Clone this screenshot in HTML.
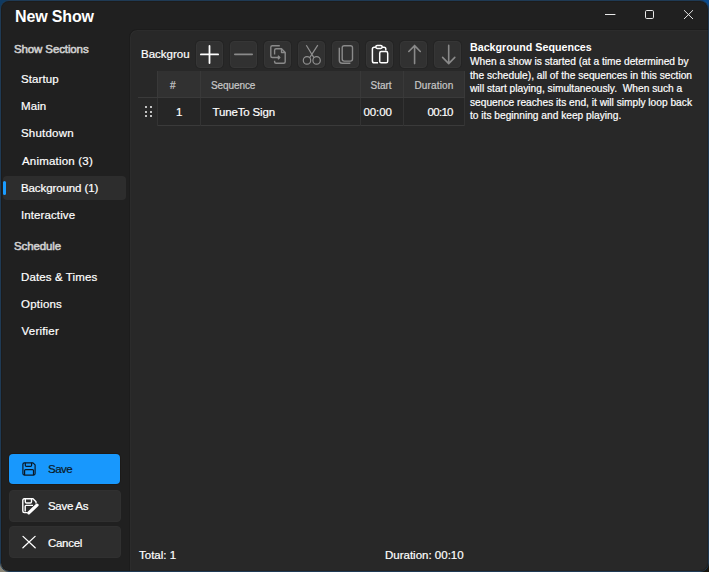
<!DOCTYPE html>
<html><head><meta charset="utf-8">
<style>
*{margin:0;padding:0;box-sizing:border-box}
html,body{width:709px;height:572px;overflow:hidden;background:#1f3a54;font-family:"Liberation Sans",sans-serif;color:#fff}
.abs{position:absolute}
#win{position:absolute;left:1px;top:1px;width:707px;height:570px;background:#202020;border-radius:8px;overflow:hidden}
.t{position:absolute;white-space:nowrap;line-height:16px;font-size:11.5px;-webkit-text-stroke:0.2px currentColor}
.h{font-size:11.5px;color:#d0d0d0;letter-spacing:-0.12px;-webkit-text-stroke:0.55px #d0d0d0}
#panel{position:absolute;left:129px;top:29px;width:600px;height:560px;background:#282828;border:1px solid #1c1c1c;border-radius:8px;box-shadow:inset 1px 1px 0 #2c2c2c}
.tb{position:absolute;top:41px;width:27px;height:27px;background:#313131;border:1px solid #363636;border-radius:4px;box-shadow:0 0 0 1px #242424}
.tb svg{margin:-1px 0 0 -1px}
.tb svg{position:absolute;left:0;top:0;overflow:visible}
.btn{position:absolute;left:9px;width:112px;height:32px;background:#2d2d2d;border-radius:4px;border:1px solid #303030}
.th{font-size:10px;color:#c8c8c8}
</style></head><body>
<div class="abs" style="left:0;top:0;width:10px;height:10px;background:#0f3a62"></div>
<div class="abs" style="left:699px;top:0;width:10px;height:10px;background:#0a4a8c"></div>
<div class="abs" style="left:699px;top:562px;width:10px;height:10px;background:#16150f"></div>
<div class="abs" style="left:0;top:562px;width:10px;height:10px;background:#8a8678"></div>
<div class="abs" style="left:0;top:0;width:709px;height:572px;border:1px solid #1f3a54;border-radius:9px"></div>
<div id="win"><div style="position:absolute;left:-1px;top:-1px;width:709px;height:572px">

<!-- title -->
<div class="t" style="left:15px;top:8px;font-size:16px;font-weight:700;line-height:18px;letter-spacing:-0.15px;-webkit-text-stroke:0">New Show</div>
<svg class="abs" style="left:600px;top:5px" width="100" height="20" viewBox="0 0 100 20">
  <line x1="5" y1="9.5" x2="15.4" y2="9.5" stroke="#e8e8e8" stroke-width="1"/>
  <rect x="45.5" y="5.5" width="8" height="8" rx="1.2" fill="none" stroke="#e8e8e8" stroke-width="1"/>
  <path d="M84 5.2 L93 14 M93 5.2 L84 14" stroke="#e6e6e6" stroke-width="1"/>
</svg>

<!-- sidebar -->
<div class="t h" style="left:14px;top:41px">Show Sections</div>
<div class="t" style="left:21px;top:71px;letter-spacing:0.1px">Startup</div>
<div class="t" style="left:21px;top:98px;letter-spacing:0.1px">Main</div>
<div class="t" style="left:21px;top:125px;letter-spacing:0.2px">Shutdown</div>
<div class="t" style="left:22px;top:153px;letter-spacing:0.2px">Animation (3)</div>
<div class="abs" style="left:3px;top:176px;width:123px;height:24px;background:#2d2d2d;border-radius:4px"></div>
<div class="abs" style="left:3px;top:181px;width:3px;height:14px;background:#1a9cff;border-radius:2px"></div>
<div class="t" style="left:21px;top:180px;letter-spacing:-0.1px">Background (1)</div>
<div class="t" style="left:21px;top:207px;letter-spacing:0.1px">Interactive</div>
<div class="t h" style="left:14px;top:238px">Schedule</div>
<div class="t" style="left:21px;top:269px;letter-spacing:0.12px">Dates &amp; Times</div>
<div class="t" style="left:21px;top:296px;letter-spacing:0.2px">Options</div>
<div class="t" style="left:21.6px;top:323px;letter-spacing:0.2px">Verifier</div>

<div class="abs" style="left:9px;top:454px;width:111px;height:30px;background:#1898fd;border-radius:4px;box-shadow:0 0 0 1px #1c1a18"></div>
<svg class="abs" style="left:18px;top:458px;overflow:visible" width="22" height="22" viewBox="0 0 22 22" fill="none" stroke="#0a1826" stroke-width="1.2" stroke-linejoin="round">
  <path d="M6.4 4.8 H15 L17.1 6.9 V15.6 Q17.1 17.1 15.6 17.1 H6.4 Q4.9 17.1 4.9 15.6 V6.3 Q4.9 4.8 6.4 4.8 Z"/>
  <path d="M7.3 4.8 V7.2 Q7.3 8.3 8.4 8.3 H12.5 Q13.6 8.3 13.6 7.2 V4.8"/>
  <path d="M6.6 17.1 V12.6 Q6.6 11.6 7.6 11.6 H14.5 Q15.5 11.6 15.5 12.6 V17.1"/>
</svg>
<div class="t" style="left:48px;top:461px;color:#0a1826;letter-spacing:-0.5px">Save</div>
<div class="btn" style="top:490px"></div>
<svg class="abs" style="left:18px;top:495px;overflow:visible" width="22" height="22" viewBox="0 0 22 22" fill="none" stroke="#fff" stroke-width="1.4" stroke-linejoin="round">
  <path d="M9.5 17.6 H6.3 Q4.8 17.6 4.8 16.1 V5.3 Q4.8 3.8 6.3 3.8 H15 L18 6.8 V8.5"/>
  <path d="M7.3 3.8 V6.8 Q7.3 8 8.5 8 H12.3 Q13.5 8 13.5 6.8 V3.8"/>
  <path d="M7.2 16.5 V11.2 Q7.2 10.4 8 10.4 H15"/>
  <path d="M10.8 17.8 L19 10.2" stroke-width="3.2" stroke-linecap="round"/>
</svg>
<div class="t" style="left:48px;top:498px;letter-spacing:-0.3px">Save As</div>
<div class="btn" style="top:526px"></div>
<svg class="abs" style="left:18px;top:531px" width="22" height="22" viewBox="0 0 22 22" fill="none" stroke="#fff" stroke-width="1.3" stroke-linecap="round">
  <path d="M5 5.4 L17.2 16.8 M17.1 5.4 L4.9 16.8"/>
</svg>
<div class="t" style="left:48px;top:535px;letter-spacing:-0.3px">Cancel</div>

<!-- panel -->
<div id="panel"></div>
<div class="t" style="left:141px;top:46px">Backgrou</div>

<div class="tb" style="left:196px"><svg width="27" height="27" viewBox="0 0 27 27" fill="none" stroke="#fff" stroke-width="1.8" stroke-linecap="round"><path d="M13.5 4.9 V22.1 M4.9 13.4 H22.1"/></svg></div>
<div class="tb" style="left:230px"><svg width="27" height="27" viewBox="0 0 27 27" fill="none" stroke="#8a8a8a" stroke-width="1.6" stroke-linecap="round"><path d="M4.8 13.4 H22.2"/></svg></div>
<div class="tb" style="left:264px"><svg width="27" height="27" viewBox="0 0 27 27" fill="none" stroke="#8a8a8a" stroke-width="1.4" stroke-linejoin="round">
  <path d="M15.8 4.8 H8.3 Q6.8 4.8 6.8 6.3 V15 Q6.8 16.5 8.3 16.5 H15.6"/>
  <path d="M13.9 14.7 L15.8 16.5 L13.9 18.3"/>
  <path d="M10.6 13.6 V9.3 Q10.6 7.8 12.1 7.8 H17.5 L21.2 11.5 V20.7 Q21.2 22.2 19.7 22.2 H12.1 Q10.6 22.2 10.6 20.7 V19.8"/>
  <path d="M17.5 7.8 V11.5 H21.2"/>
</svg></div>
<div class="tb" style="left:298px"><svg width="27" height="27" viewBox="0 0 27 27" fill="none" stroke="#8f8f8f" stroke-width="1.2">
  <path d="M8.3 4.2 L15.9 16.6 M19.8 4.2 L11.7 16.6"/>
  <circle cx="9" cy="19.4" r="3.7"/><circle cx="18.6" cy="19.4" r="3.7"/>
</svg></div>
<div class="tb" style="left:332px"><svg width="27" height="27" viewBox="0 0 27 27" fill="none" stroke="#8a8a8a" stroke-width="1.4">
  <rect x="10.2" y="4.8" width="10.3" height="15.3" rx="2"/>
  <path d="M7.3 6.8 V19.3 Q7.3 22.3 10.3 22.3 H18.4"/>
</svg></div>
<div class="tb" style="left:366px"><svg width="27" height="27" viewBox="0 0 27 27" fill="none" stroke="#fff" stroke-width="1.5">
  <path d="M12 21.8 H8.2 Q6.4 21.8 6.4 20 V8 Q6.4 6.2 8.2 6.2 H9.8 M16.2 6.2 H18 Q19.8 6.2 19.8 8 V9.5"/>
  <rect x="9.8" y="4.6" width="6.4" height="2.8" rx="1.4"/>
  <rect x="13.7" y="10.6" width="8" height="11.2" rx="1.6"/>
</svg></div>
<div class="tb" style="left:400px"><svg width="27" height="27" viewBox="0 0 27 27" fill="none" stroke="#8a8a8a" stroke-width="1.6" stroke-linecap="round" stroke-linejoin="round"><path d="M14.6 4.6 V22.6 M8.8 10.5 L14.6 4.6 L20.3 10.5"/></svg></div>
<div class="tb" style="left:434px"><svg width="27" height="27" viewBox="0 0 27 27" fill="none" stroke="#8a8a8a" stroke-width="1.6" stroke-linecap="round" stroke-linejoin="round"><path d="M14.7 4.4 V22.6 M8.6 16.4 L14.7 22.6 L20.8 16.4"/></svg></div>

<!-- table -->
<div class="abs" style="left:157px;top:71px;width:308px;height:26px;background:#313131"></div>
<div class="abs" style="left:157px;top:98px;width:308px;height:27px;background:#262626"></div>
<div class="abs" style="left:138px;top:97px;width:327px;height:1px;background:#3a3a3a"></div>
<div class="abs" style="left:157px;top:125px;width:308px;height:1px;background:#3a3a3a"></div>
<div class="abs" style="left:157px;top:71px;width:1px;height:26px;background:#393939"></div><div class="abs" style="left:157px;top:98px;width:1px;height:28px;background:#333"></div>
<div class="abs" style="left:200px;top:71px;width:1px;height:26px;background:#393939"></div><div class="abs" style="left:200px;top:98px;width:1px;height:28px;background:#333"></div>
<div class="abs" style="left:360px;top:71px;width:1px;height:26px;background:#393939"></div><div class="abs" style="left:360px;top:98px;width:1px;height:28px;background:#333"></div>
<div class="abs" style="left:403px;top:71px;width:1px;height:26px;background:#393939"></div><div class="abs" style="left:403px;top:98px;width:1px;height:28px;background:#333"></div>
<div class="abs" style="left:464px;top:71px;width:1px;height:26px;background:#393939"></div><div class="abs" style="left:464px;top:98px;width:1px;height:28px;background:#333"></div>
<div class="t th" style="left:170px;top:78px">#</div>
<div class="t th" style="left:211px;top:78px;letter-spacing:-0.1px">Sequence</div>
<div class="t th" style="left:370.5px;top:78px">Start</div>
<div class="t th" style="left:414.5px;top:78px;letter-spacing:0.15px">Duration</div>
<svg class="abs" style="left:140px;top:100px" width="16" height="22" viewBox="0 0 16 22" fill="#e8e8e8">
  <circle cx="6" cy="7" r="1.1"/><circle cx="11" cy="7" r="1.1"/>
  <circle cx="6" cy="12" r="1.1"/><circle cx="11" cy="12" r="1.1"/>
  <circle cx="6" cy="16" r="1.1"/><circle cx="11" cy="16" r="1.1"/>
</svg>
<div class="t" style="left:176px;top:104px">1</div>
<div class="t" style="left:212.5px;top:104px;letter-spacing:-0.15px">TuneTo Sign</div>
<div class="t" style="left:363.5px;top:104px;letter-spacing:-0.1px">00:00</div>
<div class="t" style="left:427.5px;top:104px;letter-spacing:-0.7px">00:10</div>

<!-- description -->
<div class="t" style="left:470px;top:39px;font-size:10.7px;font-weight:700;-webkit-text-stroke:0">Background Sequences</div>
<div class="abs" style="left:470px;top:55px;white-space:nowrap;font-size:10.2px;line-height:13.5px;color:#fff;-webkit-text-stroke:0.2px #fff">When a show is started (at a time determined by<br>the schedule), all of the sequences in this section<br>will start playing, simultaneously.&nbsp; When such a<br>sequence reaches its end, it will simply loop back<br>to its beginning and keep playing.</div>

<div class="t" style="left:139px;top:547px">Total: 1</div>
<div class="t" style="left:385px;top:547px">Duration: 00:10</div>
</div></div>
<div class="abs" style="left:1px;top:1px;width:707px;height:570px;border-radius:8px;border:1px solid rgba(0,0,0,0.12)"></div>
</body></html>
